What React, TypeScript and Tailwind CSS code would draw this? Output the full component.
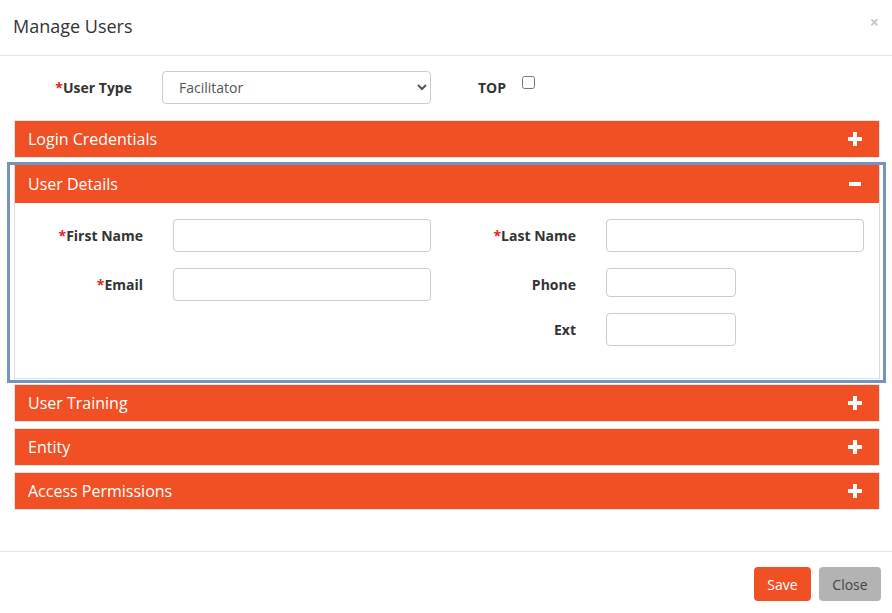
import React from "react";

const orange = "bg-[#f05024]";

function PlusIcon() {
  return (
    <svg width="14" height="14" viewBox="0 0 14 14" className="block">
      <rect x="5" y="0" width="4" height="14" fill="white" />
      <rect x="0" y="5" width="14" height="4" fill="white" />
    </svg>
  );
}

function MinusIcon() {
  return (
    <svg width="14" height="14" viewBox="0 0 14 14" className="block">
      <rect x="1" y="5" width="12" height="4" fill="white" />
    </svg>
  );
}

function PanelHeader({ title, open = false, tall = false }: { title: string; open?: boolean; tall?: boolean }) {
  return (
    <div
      className={`flex ${tall ? "h-[38px]" : "h-[36px]"} items-center justify-between ${orange} pl-[13px] pr-[17px]`}
    >
      <span className="text-[16px] text-white">{title}</span>
      {open ? <MinusIcon /> : <PlusIcon />}
    </div>
  );
}

function CollapsedPanel({ title }: { title: string }) {
  return (
    <div className="border border-[#e3e3e3]">
      <PanelHeader title={title} />
    </div>
  );
}

function Label({ text, required = false, width }: { text: string; required?: boolean; width: string }) {
  return (
    <label className={`${width} shrink-0 text-right text-[14px] font-bold text-[#333]`}>
      {required ? <span className="text-[#e8202a]">*</span> : null}
      {text}
    </label>
  );
}

const inputClass = "rounded-[4px] border border-[#cccccc] bg-white px-3 text-[14px] outline-none";

export default function App() {
  return (
    <div
      className="flex h-[613px] w-[892px] flex-col overflow-hidden bg-white text-[#333]"
      style={{ fontFamily: '"Open Sans", "Liberation Sans", sans-serif' }}
    >
      <div className="flex h-[56px] shrink-0 items-start justify-between border-b border-[#e5e5e5] pl-[13px] pr-[13px]">
        <h4 className="mt-[13px] text-[18px] leading-[26px] text-[#333]">Manage Users</h4>
        <span className="mt-[14px] text-[16px] font-bold leading-none text-[#c8c8c8]">×</span>
      </div>

      <div className="flex-1 pl-[14px] pr-[12px] pt-[15px]">
        <div className="flex items-center">
          <Label text="User Type" required width="w-[118px]" />
          <select className="ml-[30px] h-[33px] w-[269px] rounded-[4px] border border-[#cccccc] bg-white pl-[12px] pr-[6px] text-[14px] text-[#555]">
            <option>Facilitator</option>
          </select>
          <span className="ml-[47px] text-[14px] font-bold text-[#333]">TOP</span>
          <input type="checkbox" className="mb-[11px] ml-[16px] h-[13px] w-[13px]" />
        </div>

        <div className="mt-[16px]">
          <CollapsedPanel title="Login Credentials" />
        </div>

        <div className="ml-[-7px] mr-[-6px] mt-[4px] border-[3px] border-[#7394bf] pb-[1px] pl-[4px] pr-[3px]">
          <div className="border-x border-b border-[#dddddd]">
            <PanelHeader title="User Details" open tall />
            <div className="flex h-[175px] pt-[16px]">
              <div className="flex flex-col gap-[16px]">
                <div className="flex items-center">
                  <Label text="First Name" required width="w-[128px]" />
                  <input className={`ml-[30px] h-[33px] w-[258px] ${inputClass}`} />
                </div>
                <div className="flex items-center">
                  <Label text="Email" required width="w-[128px]" />
                  <input className={`ml-[30px] h-[33px] w-[258px] ${inputClass}`} />
                </div>
              </div>
              <div className="flex flex-col">
                <div className="flex items-center">
                  <Label text="Last Name" required width="w-[145px]" />
                  <input className={`ml-[30px] h-[33px] w-[258px] ${inputClass}`} />
                </div>
                <div className="mt-[16px] flex h-[33px] items-center">
                  <Label text="Phone" width="w-[145px]" />
                  <input className={`ml-[30px] h-[29px] w-[130px] self-start ${inputClass}`} />
                </div>
                <div className="mt-[12px] flex items-center">
                  <Label text="Ext" width="w-[145px]" />
                  <input className={`ml-[30px] h-[33px] w-[130px] ${inputClass}`} />
                </div>
              </div>
            </div>
          </div>
        </div>

        <div className="mt-[1px] flex flex-col gap-[6px]">
          <CollapsedPanel title="User Training" />
          <CollapsedPanel title="Entity" />
          <CollapsedPanel title="Access Permissions" />
        </div>
      </div>

      <div className="flex h-[62px] shrink-0 justify-end gap-[8px] border-t border-[#e5e5e5] pr-[11px] pt-[15px]">
        <button className={`h-[34px] w-[57px] rounded-[4px] ${orange} text-[14px] text-white`}>Save</button>
        <button className="h-[34px] w-[62px] rounded-[4px] bg-[#b3b3b3] text-[14px] text-[#444]">Close</button>
      </div>
    </div>
  );
}
